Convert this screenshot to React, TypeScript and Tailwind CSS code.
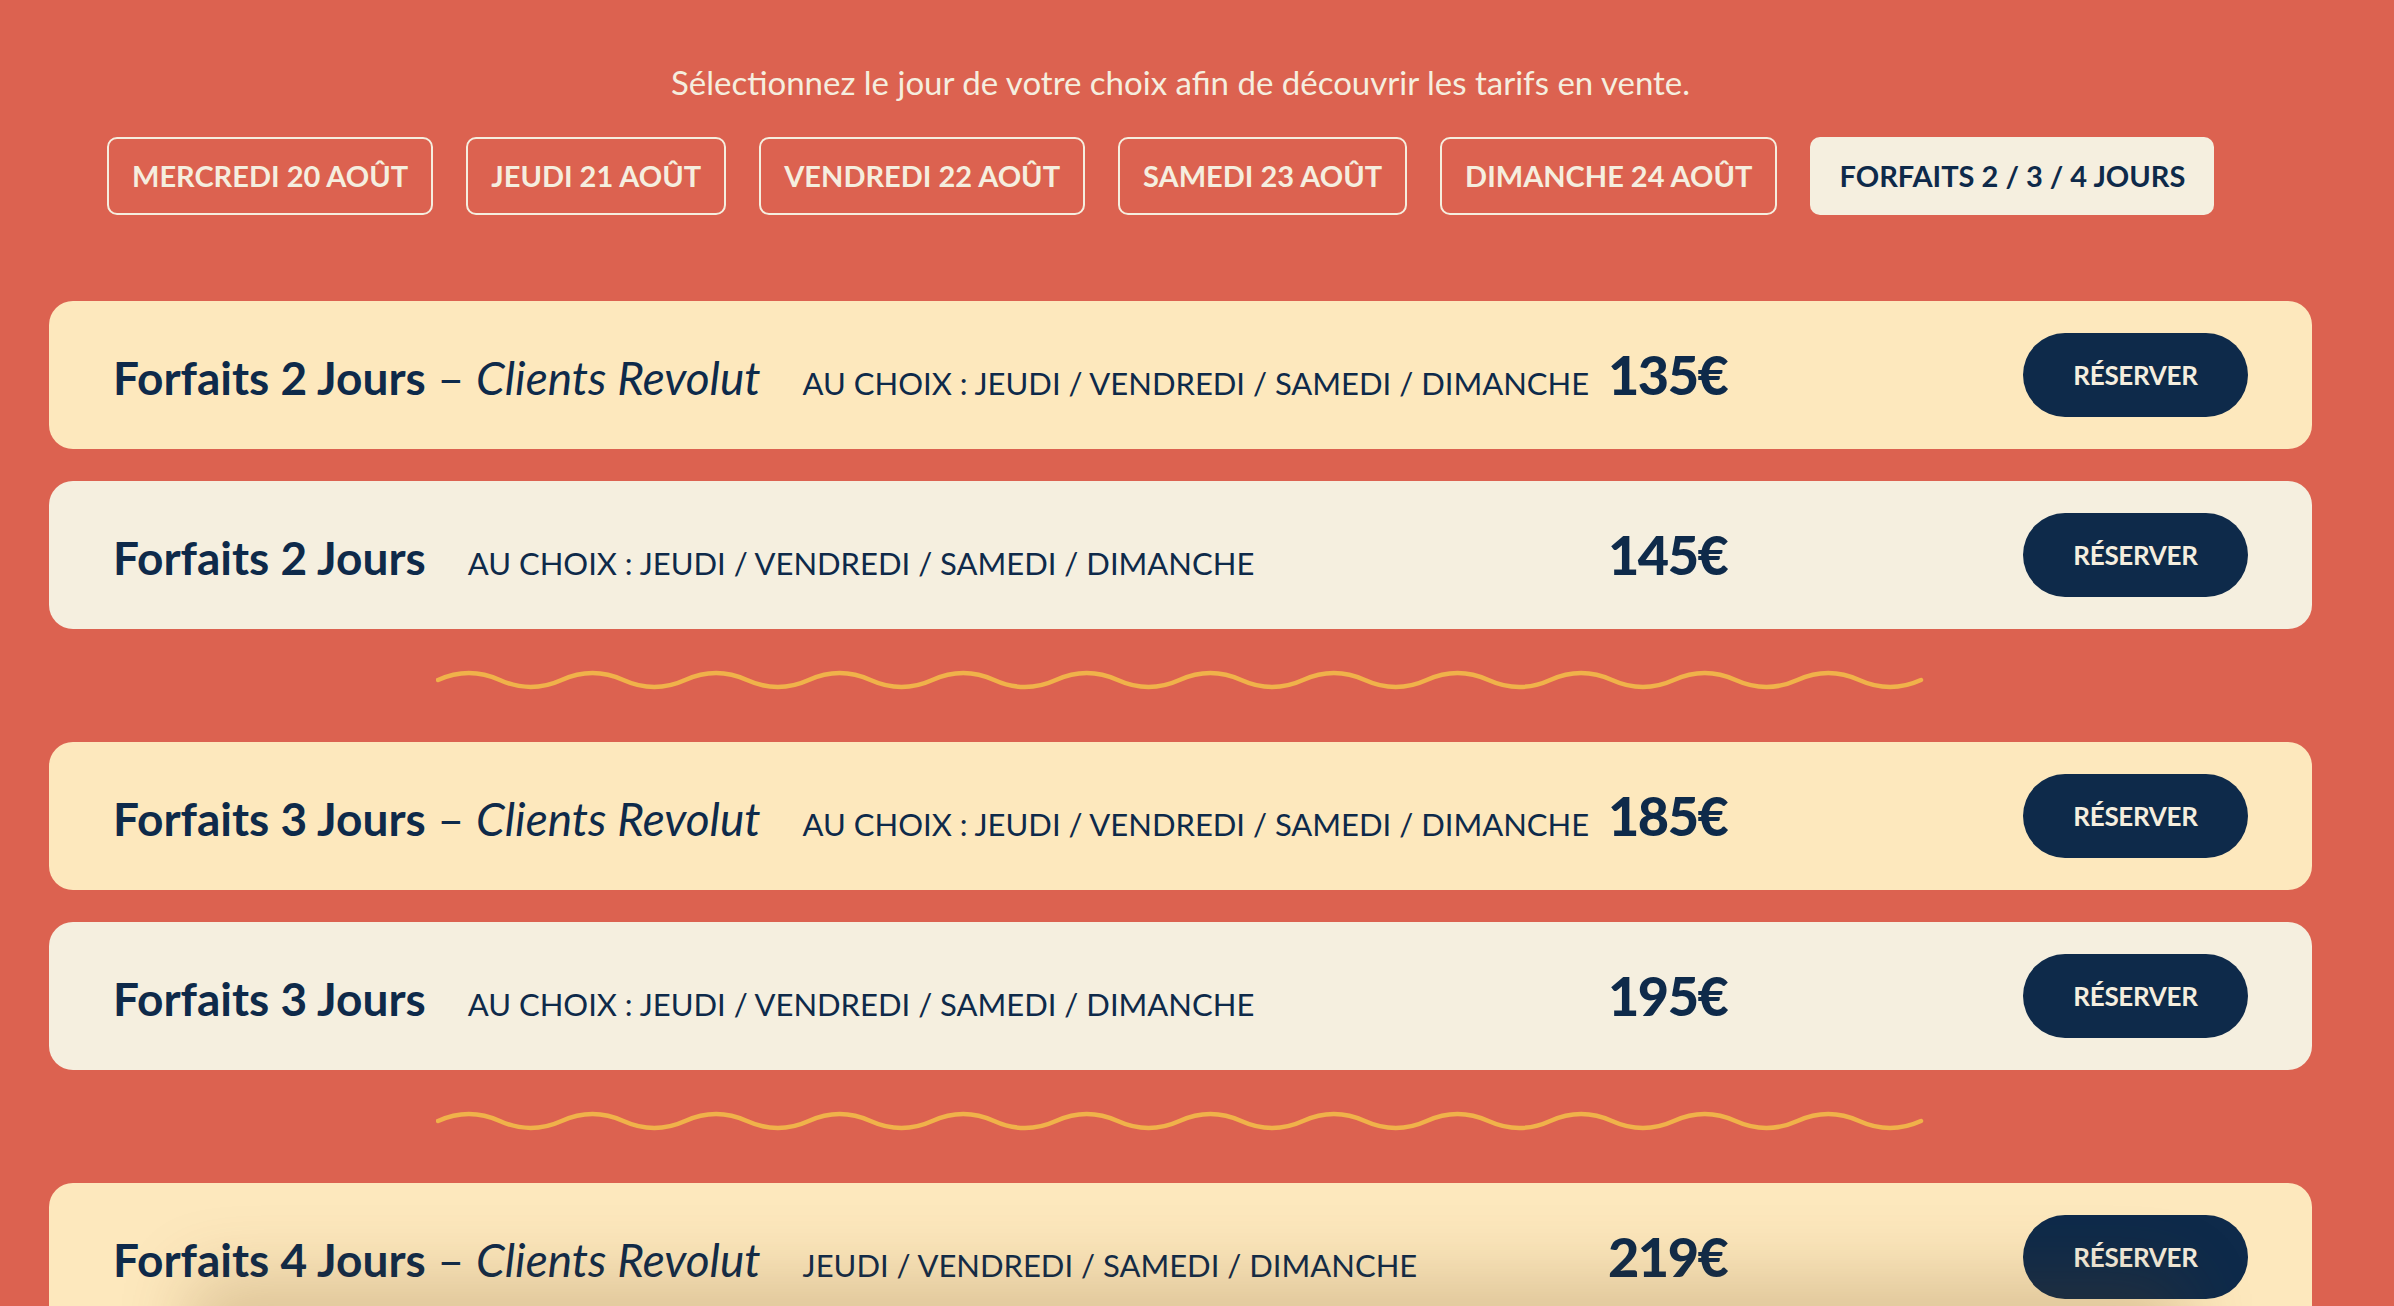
import React from "react";

const days = [
  "MERCREDI 20 AOÛT",
  "JEUDI 21 AOÛT",
  "VENDREDI 22 AOÛT",
  "SAMEDI 23 AOÛT",
  "DIMANCHE 24 AOÛT",
];

type Offer = {
  title: string;
  revolut: boolean;
  sub: string;
  price: string;
};

const groups: Offer[][] = [
  [
    { title: "Forfaits 2 Jours", revolut: true, sub: "AU CHOIX : JEUDI / VENDREDI / SAMEDI / DIMANCHE", price: "135€" },
    { title: "Forfaits 2 Jours", revolut: false, sub: "AU CHOIX : JEUDI / VENDREDI / SAMEDI / DIMANCHE", price: "145€" },
  ],
  [
    { title: "Forfaits 3 Jours", revolut: true, sub: "AU CHOIX : JEUDI / VENDREDI / SAMEDI / DIMANCHE", price: "185€" },
    { title: "Forfaits 3 Jours", revolut: false, sub: "AU CHOIX : JEUDI / VENDREDI / SAMEDI / DIMANCHE", price: "195€" },
  ],
  [
    { title: "Forfaits 4 Jours", revolut: true, sub: "JEUDI / VENDREDI / SAMEDI / DIMANCHE", price: "219€" },
  ],
];

function wavePath() {
  const period = 1483 / 12;
  const half = period / 2;
  let d = `M2,11 q${(half / 2).toFixed(2)},-14 ${half.toFixed(2)},0`;
  for (let i = 1; i < 24; i++) d += ` t${half.toFixed(2)},0`;
  return d;
}

function Wave() {
  return (
    <div className="flex justify-center mt-[40px] mb-[53px] h-[20px]">
      <svg width="1490" height="22" viewBox="0 0 1490 22" fill="none">
        <path d={wavePath()} stroke="#f0b24a" strokeWidth="4.5" strokeLinecap="round" fill="none" />
      </svg>
    </div>
  );
}

function Card({ o }: { o: Offer }) {
  return (
    <div
      className={`h-[148px] rounded-[24px] pl-[64px] pr-[64px] flex items-center ${
        o.revolut ? "bg-[#fde8bd]" : "bg-[#f5efdf]"
      }`}
    >
      <div className="flex items-baseline flex-1 text-[#0e2a4a]">
        <div className="w-[1495px] shrink-0 flex items-baseline whitespace-nowrap">
          <span className="text-[46px] font-bold leading-none">
            {o.title}
            {o.revolut && (
              <>
                <span className="font-normal"> – </span>
                <span className="font-normal italic">Clients Revolut</span>
              </>
            )}
          </span>
          <span className="ml-[42px] text-[31px] leading-none">{o.sub}</span>
        </div>
        <span className="text-[54px] font-black leading-none tracking-[-1.5px]">{o.price}</span>
      </div>
      <button className="w-[225px] h-[84px] rounded-full bg-[#0e2a4a] text-[#f5eedf] text-[26px] font-bold flex items-center justify-center tracking-[-0.3px]">
        RÉSERVER
      </button>
    </div>
  );
}

export default function App() {
  return (
    <div
      className="min-h-screen bg-[#dc6250] overflow-hidden relative"
      style={{ fontFamily: "Lato, 'Open Sans', sans-serif" }}
    >
      <div className="w-[2263px] ml-[49px] pt-[62px]">
        <p className="text-center text-[33px] leading-[40px] font-normal text-[#f5eedf]">
          Sélectionnez le jour de votre choix afin de découvrir les tarifs en vente.
        </p>
        <div className="flex gap-[33px] pl-[58px] mt-[35px]">
          {days.map((d) => (
            <div
              key={d}
              className="h-[78px] px-[23px] border-2 border-[#f5eedf] rounded-[10px] flex items-center text-[29px] font-bold text-[#f5eedf] whitespace-nowrap"
            >
              {d}
            </div>
          ))}
          <div className="h-[78px] px-[29px] rounded-[10px] bg-[#f5efdf] flex items-center text-[29px] font-bold text-[#0e2a4a] whitespace-nowrap">
            FORFAITS 2 / 3 / 4 JOURS
          </div>
        </div>
        <div className="mt-[86px] flex flex-col">
          {groups.map((g, gi) => (
            <React.Fragment key={gi}>
              <div className="flex flex-col gap-[32px]">
                {g.map((o, i) => (
                  <Card key={i} o={o} />
                ))}
              </div>
              {gi < groups.length - 1 && <Wave />}
            </React.Fragment>
          ))}
        </div>
      </div>
      <div className="fixed left-[220px] right-[240px] bottom-[-50px] h-[50px] shadow-[0_0_70px_30px_rgba(110,70,20,0.22)]" />
    </div>
  );
}
